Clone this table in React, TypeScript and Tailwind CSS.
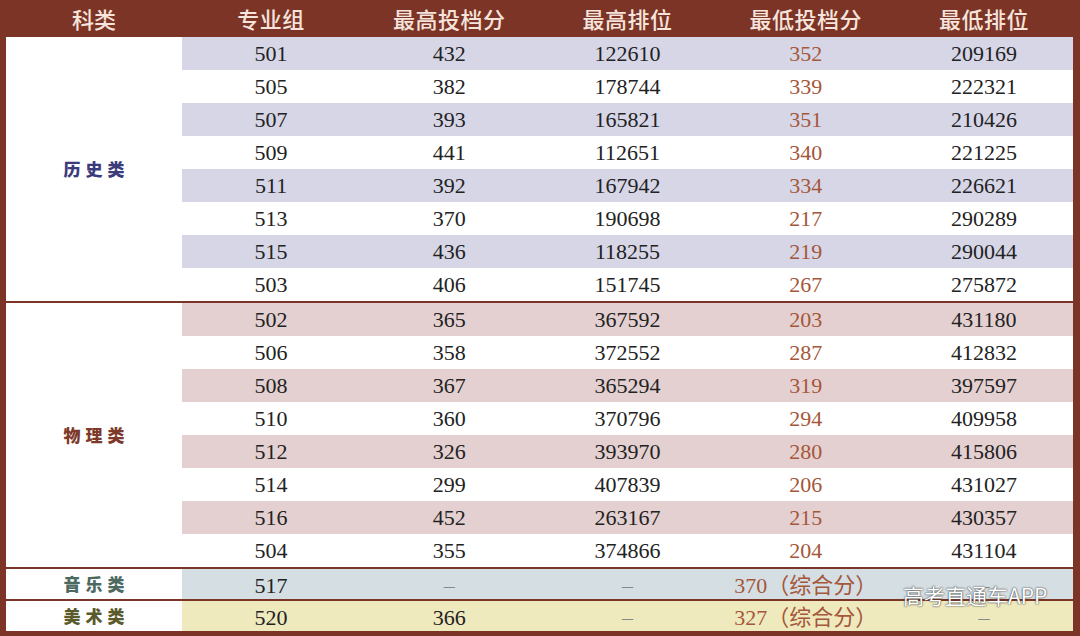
import React from "react";

type Row = [string, string, string, string, string];

const history: Row[] = [
  ["501", "432", "122610", "352", "209169"],
  ["505", "382", "178744", "339", "222321"],
  ["507", "393", "165821", "351", "210426"],
  ["509", "441", "112651", "340", "221225"],
  ["511", "392", "167942", "334", "226621"],
  ["513", "370", "190698", "217", "290289"],
  ["515", "436", "118255", "219", "290044"],
  ["503", "406", "151745", "267", "275872"],
];

const physics: Row[] = [
  ["502", "365", "367592", "203", "431180"],
  ["506", "358", "372552", "287", "412832"],
  ["508", "367", "365294", "319", "397597"],
  ["510", "360", "370796", "294", "409958"],
  ["512", "326", "393970", "280", "415806"],
  ["514", "299", "407839", "206", "431027"],
  ["516", "452", "263167", "215", "430357"],
  ["504", "355", "374866", "204", "431104"],
];

const serif = { fontFamily: '"Liberation Serif", "Noto Sans CJK SC", serif' };
const cjk = { fontFamily: '"Noto Sans CJK SC", "Noto Sans", sans-serif' };

function DataRow({ r, shade, h }: { r: Row; shade: string; h: string }) {
  return (
    <div className={`grid grid-cols-5 ${h} ${shade} items-center text-[22px] text-[#222]`} style={serif}>
      <div className="text-center">{r[0]}</div>
      <div className="text-center">{r[1]}</div>
      <div className="text-center">{r[2]}</div>
      <div className="text-center text-[#a5573a]">{r[3]}</div>
      <div className="text-center">{r[4]}</div>
    </div>
  );
}

function Label({ text, color }: { text: string; color: string }) {
  return (
    <span className={`text-[17px] font-black tracking-[0.3em] pl-[0.3em] ${color}`} style={cjk}>
      {text}
    </span>
  );
}

function Section({ label, color, rows, shade }: { label: string; color: string; rows: Row[]; shade: string }) {
  return (
    <div className="flex bg-white">
      <div className="w-[176px] flex items-center justify-center">
        <Label text={label} color={color} />
      </div>
      <div className="flex-1 flex flex-col">
        {rows.map((r, i) => (
          <DataRow key={r[0]} r={r} shade={i % 2 === 0 ? shade : "bg-white"} h="h-[33px]" />
        ))}
      </div>
    </div>
  );
}

export default function App() {
  const headers = ["专业组", "最高投档分", "最高排位", "最低投档分", "最低排位"];
  return (
    <div className="relative w-[1080px] h-[636px] bg-[#7b3426] pl-[6px] pr-[7px] pb-[5px] flex flex-col overflow-hidden">
      <div className="flex h-[37px] items-center text-[#f6e4dc] text-[22px] font-medium" style={cjk}>
        <div className="w-[176px] text-center">科类</div>
        <div className="flex-1 grid grid-cols-5">
          {headers.map((h) => (
            <div key={h} className="text-center tracking-[0.5px]">
              {h}
            </div>
          ))}
        </div>
      </div>
      <div className="flex flex-col gap-[2px]">
        <Section label="历史类" color="text-[#3b3b7c]" rows={history} shade="bg-[#d6d6e7]" />
        <Section label="物理类" color="text-[#7d3a2a]" rows={physics} shade="bg-[#e4d0d1]" />
        <div className="flex bg-white h-[30px]">
          <div className="w-[176px] flex items-center justify-center">
            <Label text="音乐类" color="text-[#4d6a62]" />
          </div>
          <div className="flex-1 grid grid-cols-5 bg-[#d4dee3] items-center text-[22px] text-[#222]" style={serif}>
            <div className="text-center">517</div>
            <div className="text-center text-[#888]">–</div>
            <div className="text-center text-[#888]">–</div>
            <div className="text-center text-[#a5573a]">370（综合分）</div>
            <div className="text-center text-[#888]">–</div>
          </div>
        </div>
        <div className="flex bg-white h-[30px]">
          <div className="w-[176px] flex items-center justify-center">
            <Label text="美术类" color="text-[#5b5a2c]" />
          </div>
          <div className="flex-1 grid grid-cols-5 bg-[#efe9be] items-center text-[22px] text-[#222]" style={serif}>
            <div className="text-center">520</div>
            <div className="text-center">366</div>
            <div className="text-center text-[#888]">–</div>
            <div className="text-center text-[#a5573a]">327（综合分）</div>
            <div className="text-center text-[#888]">–</div>
          </div>
        </div>
      </div>
      <div
        className="absolute left-[903px] top-[580px] text-[21px] text-white"
        style={{ ...cjk, textShadow: "0 0 2px rgba(60,60,60,0.9), 0 0 1px rgba(60,60,60,0.9)" }}
      >
        高考直通车APP
      </div>
    </div>
  );
}
